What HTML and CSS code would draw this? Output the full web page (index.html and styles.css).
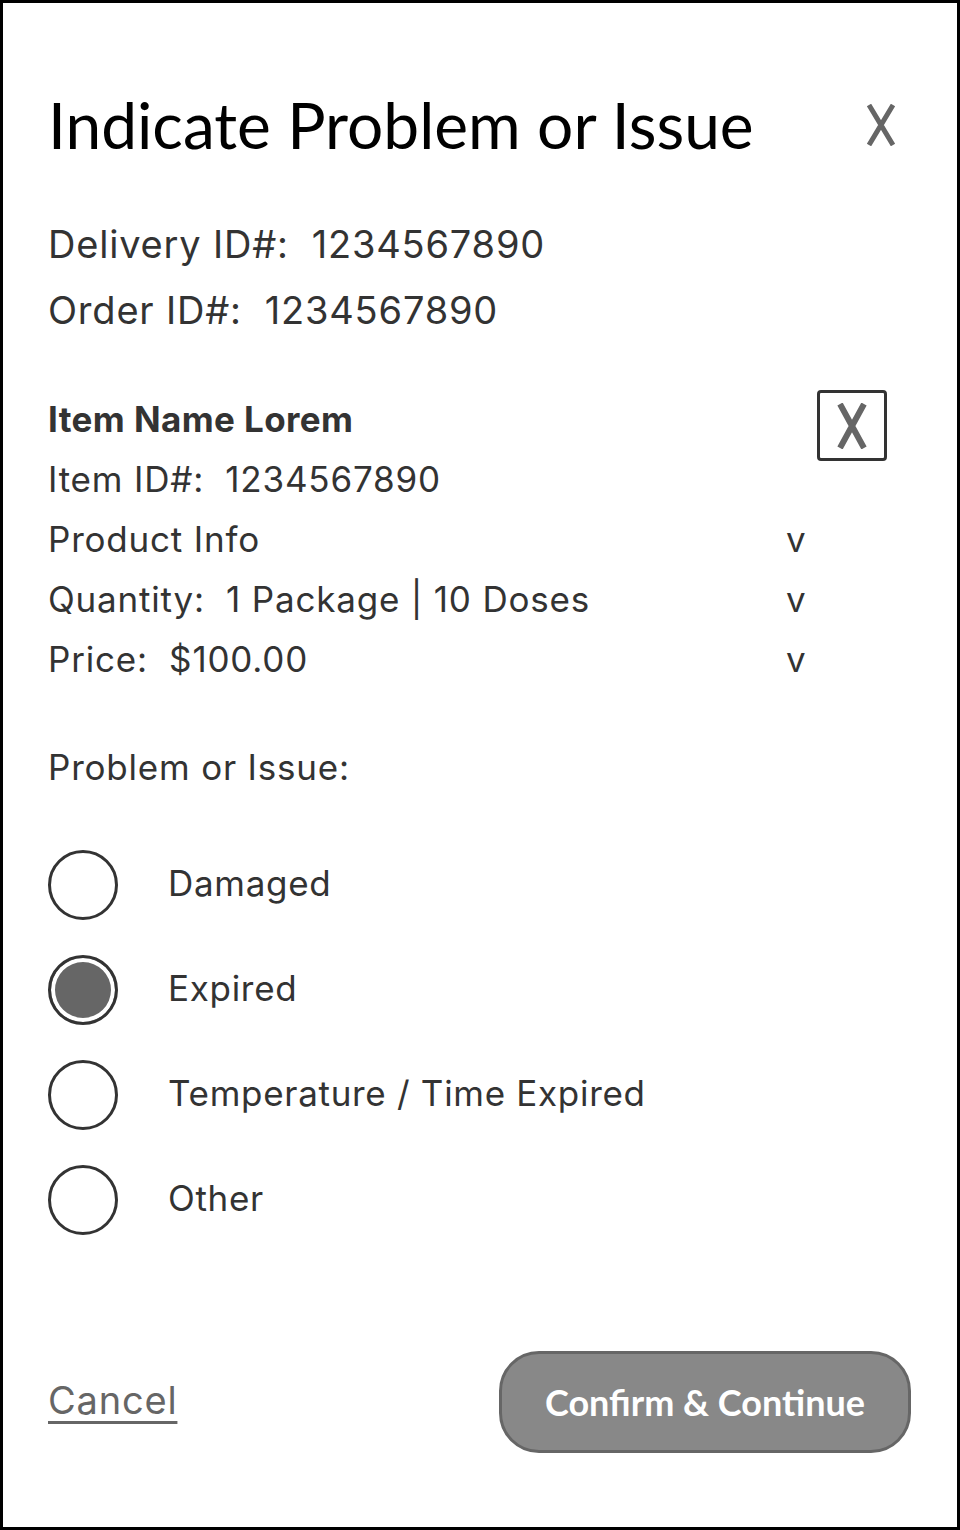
FILE: index.html
```html
<!DOCTYPE html>
<html lang="en">
<head>
<meta charset="utf-8">
<title>Indicate Problem or Issue</title>
<link rel="stylesheet" href="styles.css">
</head>
<body>
<div class="dialog">
  <header class="dialog-head">
    <h1 class="title">Indicate Problem or Issue</h1>
    <button class="close" aria-label="Close">
      <svg width="30" height="42" viewBox="0 0 30 42"><path d="M3 1 L27 41 M27 1 L3 41" stroke="#666" stroke-width="5" fill="none"/></svg>
    </button>
  </header>

  <div class="ids">
    <div class="line">Delivery ID#:&nbsp; 1234567890</div>
    <div class="line">Order ID#:&nbsp; 1234567890</div>
  </div>

  <div class="item">
    <div class="item-rows">
      <div class="row"><span class="item-name">Item Name Lorem</span></div>
      <div class="row"><span>Item ID#:&nbsp; 1234567890</span></div>
      <div class="row"><span>Product Info</span><span class="chev">v</span></div>
      <div class="row"><span>Quantity:&nbsp; 1 Package | 10 Doses</span><span class="chev">v</span></div>
      <div class="row"><span>Price:&nbsp; $100.00</span><span class="chev">v</span></div>
    </div>
    <button class="remove" aria-label="Remove item">
      <svg width="30" height="46" viewBox="0 0 30 46"><path d="M3 1 L27 45 M27 1 L3 45" stroke="#666" stroke-width="6" fill="none"/></svg>
    </button>
  </div>

  <div class="label">Problem or Issue:</div>

  <div class="options">
    <div class="option"><span class="radio"></span><span class="opt-text">Damaged</span></div>
    <div class="option"><span class="radio checked"></span><span class="opt-text">Expired</span></div>
    <div class="option"><span class="radio"></span><span class="opt-text">Temperature / Time Expired</span></div>
    <div class="option"><span class="radio"></span><span class="opt-text">Other</span></div>
  </div>

  <footer class="dialog-foot">
    <a class="cancel" href="#">Cancel</a>
    <button class="confirm">Confirm &amp; Continue</button>
  </footer>
</div>
</body>
</html>
```

FILE: styles.css
```css
* { box-sizing: border-box; }
html, body { margin: 0; padding: 0; background: #fff; }

.dialog {
  width: 960px;
  height: 1530px;
  border: 3px solid #000;
  padding: 87px 46px 0 45px;
  font-family: Inter, "Liberation Sans", sans-serif;
  color: #333;
  display: flex;
  flex-direction: column;
}

.dialog-head {
  display: flex;
  justify-content: space-between;
  align-items: center;
  height: 70px;
}
.title {
  margin: 0;
  font-family: Lato, "Liberation Sans", sans-serif;
  font-weight: 400;
  font-size: 64px;
  line-height: 70px;
  color: #000;
}
.close {
  border: 0;
  background: none;
  padding: 0;
  margin-right: 15px;
  width: 30px;
  height: 42px;
  display: block;
}
.close svg { display: block; }

.ids { margin-top: 51px; }
.line {
  font-size: 38px;
  letter-spacing: 0.8px;
  line-height: 66px;
}

.item {
  margin-top: 46px;
  display: flex;
  gap: 13px;
  align-items: flex-start;
}
.item-rows { width: 756px; }
.row {
  height: 60px;
  display: flex;
  justify-content: space-between;
  align-items: center;
  font-size: 35px;
  letter-spacing: 0.8px;
}
.item-name { font-weight: 700; letter-spacing: 0.4px; }
.chev { width: 18px; text-align: center; letter-spacing: 0; }

.remove {
  margin-top: 1px;
  width: 70px;
  height: 71px;
  border: 3px solid #333;
  border-radius: 4px;
  background: #fff;
  padding: 0;
  display: flex;
  align-items: center;
  justify-content: center;
}
.remove svg { display: block; }

.label {
  margin-top: 48px;
  font-size: 35px;
  letter-spacing: 0.8px;
  line-height: 60px;
}

.options {
  margin-top: 53px;
  display: flex;
  flex-direction: column;
  gap: 35px;
}
.option {
  display: flex;
  align-items: center;
  height: 70px;
  gap: 50px;
}
.radio {
  width: 70px;
  height: 70px;
  border: 3px solid #333;
  border-radius: 50%;
  background: #fff;
  flex: none;
}
.radio.checked {
  background: #666;
  box-shadow: inset 0 0 0 4px #fff;
}
.opt-text {
  font-size: 35px;
  letter-spacing: 0.7px;
  margin-top: -4px;
}

.dialog-foot {
  margin-top: 116px;
  display: flex;
  justify-content: space-between;
  align-items: center;
}
.cancel {
  font-size: 38px;
  letter-spacing: 0.8px;
  color: #666;
  text-decoration: underline;
  text-decoration-thickness: 3px;
  text-underline-offset: 7px;
  margin-top: -4px;
}
.confirm {
  width: 412px;
  height: 102px;
  border: 3px solid #666;
  border-radius: 40px;
  background: #888;
  color: #fff;
  font-family: Lato, "Liberation Sans", sans-serif;
  font-weight: 700;
  font-size: 36px;
  padding: 0;
}
```
